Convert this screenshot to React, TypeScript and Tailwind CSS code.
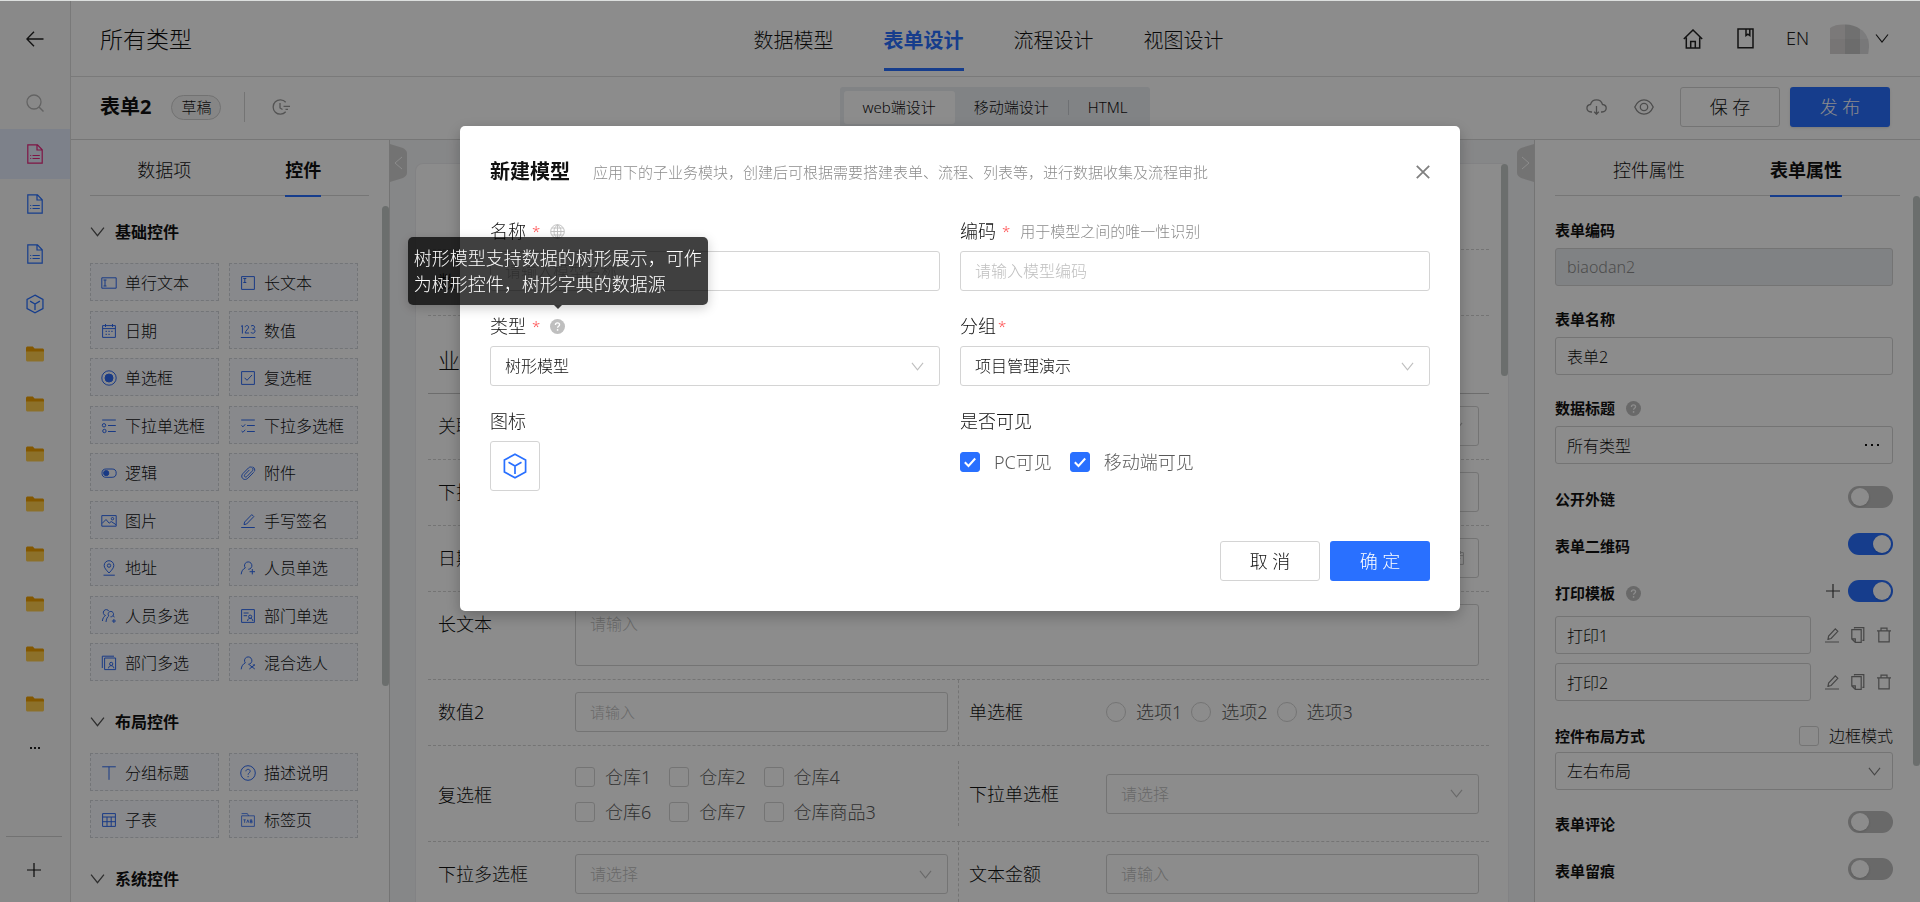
import { useState } from "react";
import type { ReactNode } from "react";

type IconProps = { className?: string };

/* ---------- ICONS ---------- */

function Svg({ className = "w-4 h-4", box = "0 0 16 16", children }: { className?: string; box?: string; children: ReactNode }) {
  return (
    <svg viewBox={box} className={`shrink-0 ${className}`} fill="none" stroke="currentColor" strokeWidth="1" aria-hidden="true">
      {children}
    </svg>
  );
}

const Chevron = ({ className = "w-[14px] h-[9px]" }: IconProps) => (
  <Svg className={className} box="0 0 14 9">
    <path d="M1 .5 7 8 13 .5" strokeWidth="1.2" />
  </Svg>
);

const Cube = ({ className }: IconProps) => (
  <Svg className={className} box="0 0 24 26">
    <path d="M12 1.2 22.6 7v12L12 24.8 1.4 19V7z M5.5 9.2 12 13l6.5-3.8 M12 13v8" strokeWidth="1.7" />
  </Svg>
);

const Doc = ({ className }: IconProps) => (
  <Svg className={className} box="0 0 16 20">
    <path d="M.8.8h9.7l4.7 5v13.4H.8z M10 .8v5.2h5.2 M3.2 11.5h1 M5.5 11.5h7.3 M3.2 14.5h1 M5.5 14.5h7.3" strokeWidth="1.2" />
  </Svg>
);

const Folder = () => (
  <Svg className="w-[18px] h-4" box="0 0 18 16">
    <path d="M0 2.2C0 1 .6.4 1.8.4h5l1.8 2h7.6c1.2 0 1.8.6 1.8 1.8V6H0z" fill="#ee9f00" stroke="none" />
    <path d="M0 5.4h18v8.4c0 1.2-.6 1.8-1.8 1.8H1.8C.6 15.6 0 15 0 13.8z" fill="#ffcd4e" stroke="none" />
  </Svg>
);

const Question = ({ className = "w-[15px] h-[15px] text-[#bfbfbf]" }: IconProps) => (
  <Svg className={className}>
    <circle cx="8" cy="8" r="8" fill="currentColor" stroke="none" />
    <path d="M5.8 6.3c0-1.3 1-2.2 2.2-2.2s2.2.8 2.2 2c0 1.7-2.1 1.7-2.1 3.3" stroke="#fff" strokeWidth="1.4" />
    <circle cx="8.1" cy="11.6" r=".9" fill="#fff" stroke="none" />
  </Svg>
);

const Pencil = ({ className }: IconProps) => (
  <Svg className={className}>
    <path d="M1 15h14 M4 12.3l.6-3.2 6.7-7.2 2.500 2.400-6.700 7.200z M4 12.300l3.100-.8" strokeWidth="1.2" />
  </Svg>
);

const Copy = ({ className }: IconProps) => (
  <Svg className={className}>
    <path d="M4.5 1.6V.7h9.3v12.600h-1.400 M1.800 2.600h9.400v12.700H5.300l-3.500-3.400z M5.300 15.300v-3.400H1.800" strokeWidth="1.2" />
  </Svg>
);

const Trash = ({ className }: IconProps) => (
  <Svg className={className}>
    <path d="M1 3.8h14 M2.8 3.8v11h10.400v-11 M5 3.800V1.200h6v2.600" strokeWidth="1.2" />
  </Svg>
);

const Plus = ({ className = "w-[14px] h-[14px]" }: IconProps) => (
  <Svg className={className} box="0 0 14 14">
    <path d="M7 0v14 M0 7h14" strokeWidth="1.2" />
  </Svg>
);

const person = "M8.3 9.3a3.700 3.700 0 1 0-3-1.400C3 9 1.500 11 1.200 14.300";

/* glyphs of the control palette */
const glyphs: Record<string, ReactNode> = {
  input: <path d="M.8 2.8h14.4v10.4H.8z M2.5 5h3 M4 5v6 M2.5 11h3" />,
  textarea: <path d="M1.6 1.6h12.8v12.8H1.600z M3.300 3.500h3 M4.800 3.500v4 M3.300 7.500h3" />,
  date: <path d="M1.6 2.6h12.8v11.800H1.600z M1.600 5.600h12.800 M4.500 1v3 M11.500 1v3 M4.500 8.300h1.500 M7.300 8.300h1.500 M10.200 8.300h1.500 M4.500 11.300h1.500 M7.300 11.300h1.500" />,
  number: (
    <path d="M.8 14.5h14.6 M1 3.500l1.400-1v8 M5.200 4.200c0-2.200 3.400-2.200 3.400 0 0 1.600-3.400 3.800-3.400 5.800H9 M11 3.200c1-1.300 3.600-.9 3.600 1.100 0 1.300-1 1.800-2 1.800 1.200 0 2.400.6 2.400 2 0 2.400-3.200 2.700-4.200 1" />
  ),
  radio: (
    <>
      <circle cx="8" cy="8" r="7.2" />
      <circle cx="8" cy="8" r="4" fill="currentColor" />
    </>
  ),
  checkbox: <path d="M1.6 1.6h12.8v12.8H1.600z M4.600 7.800l2.400 2.500 5-5.300" />,
  singleSelect: (
    <>
      <path d="M1.2 2h13.6 M7 7.5h7.8 M7 13.5h7.8" />
      <circle cx="3" cy="7.3" r="1.7" />
      <circle cx="3.4" cy="13" r="1.7" />
    </>
  ),
  multiSelect: <path d="M1.2 2h13.6 M7 7.5h7.8 M7 13.5h7.8 M1.5 7.5 3 8.800l2.200-2.500 M1.500 13 3 14.300l2.200-2.500" />,
  toggle: (
    <>
      <rect x="1" y="4" width="14.2" height="8.3" rx="4.1" />
      <circle cx="5.2" cy="8.1" r="2.6" fill="currentColor" />
    </>
  ),
  clip: <path d="M13.7 7.300l-5.800 5.900c-3.600 3.500-8.400-1-5-4.600l5.600-5.700c2.600-2.500 6 .7 3.600 3.300l-5.200 5.300c-1.600 1.500-3.500-.4-2-2l4.500-4.600 M14.300 6.500c1-1.500.3-3.800-1.700-4.600" />,
  image: (
    <>
      <path d="M.8 2.6h14.4v10.600H.8z M1 10.500l4-4 3.200 3.700 2-1.700 4.800 3.200" />
      <circle cx="11.5" cy="5.7" r="1.2" />
    </>
  ),
  sign: <path d="M1.2 14.5h13.6 M4 11.600l.6-2.600 7.200-7.400 2 2L6.600 11z" />,
  pin: (
    <>
      <path d="M2.5 15.2h11.3 M8 13C5 9.800 3.200 7.800 3.200 5.500a4.800 4.800 0 0 1 9.600 0C12.800 7.800 11 9.800 8 13z" />
      <circle cx="8" cy="5.6" r="1.7" />
    </>
  ),
  userOne: <path d={`${person} M12.3 9v5.400 M9.600 11.700H15`} />,
  userMany: <path d="M4.5 7.5A3 3 0 1 1 8 3.300 M4.500 7.500C3 8.500 1.600 10.200 1.400 13 M9.500 8.800a2.700 2.700 0 1 0-1.700-.9C6.200 9 5.300 11 5 14 M12.900 11v4 M10.900 13h4 M12 7.800l1.500 1.200" />,
  deptOne: (
    <>
      <path d="M1.6 1.6h12.8v12.800H1.600z M3.600 5h5 M3.600 7.700h3.500 M7.500 13c.2-2 1.400-2.700 2.700-2.700s2.500.7 2.700 2.700" />
      <circle cx="10.2" cy="8.7" r="1.6" />
    </>
  ),
  deptMany: (
    <>
      <path d="M3.6 3h11v11.600h-11z M1.300 13V1.200H13 M7.500 13.300c.2-2 1.400-2.600 2.700-2.600s2.500.6 2.700 2.600" />
      <circle cx="10.2" cy="8.9" r="1.6" />
    </>
  ),
  userMix: <path d={`${person} M9.3 9.800l5.500 4.200 M14.800 9.800l-5.500 4.200 M12.800 10h2.200`} />,
  title: <path d="M1.2 1.8h13.6 M8 1.8v13" />,
  desc: (
    <>
      <circle cx="8" cy="8" r="7.3" />
      <path d="M5.9 6.3c0-2.600 4.300-2.600 4.300 0 0 1.500-2.100 1.600-2.100 3.400 M8.100 11v1.200" />
    </>
  ),
  table: <path d="M1.6 1.6h12.8v12.800H1.600z M1.600 5h12.800 M1.600 9.700h12.800 M6 5v9.400 M10.200 5v9.400" />,
  tab: <path d="M1.6 3.8h12.8v10.600H1.600z M1.600 1.600h5.800l1.200 2.200 M3.400 7.800h2.400 M4.600 7.800v3 M6.700 10.800l1.100-3 1.100 3 M10.300 7.800v3h1.800v-1.500h-1.800 1.500V7.800z" strokeWidth=".8" />,
};

/* ---------- DATA ---------- */

const basicControls = [
  ["input", "单行文本"], ["textarea", "长文本"],
  ["date", "日期"], ["number", "数值"],
  ["radio", "单选框"], ["checkbox", "复选框"],
  ["singleSelect", "下拉单选框"], ["multiSelect", "下拉多选框"],
  ["toggle", "逻辑"], ["clip", "附件"],
  ["image", "图片"], ["sign", "手写签名"],
  ["pin", "地址"], ["userOne", "人员单选"],
  ["userMany", "人员多选"], ["deptOne", "部门单选"],
  ["deptMany", "部门多选"], ["userMix", "混合选人"],
];

const layoutControls = [
  ["title", "分组标题"], ["desc", "描述说明"],
  ["table", "子表"], ["tab", "标签页"],
];

/* ---------- SHARED CONTROLS ---------- */

const fieldBox = "w-full border border-[#d4d4d4] rounded-[3px] bg-white placeholder:text-[#bfbfbf] outline-none";

function SelectBox({ id, label, value, className, chevronClass = "text-[#bfbfbf]" }: { id: string; label?: string; value: string; className: string; chevronClass?: string }) {
  return (
    <div className="relative w-full">
      <select id={id} aria-label={label} defaultValue={value} className={`appearance-none ${fieldBox} ${className}`}>
        <option>{value}</option>
      </select>
      <span className={`pointer-events-none absolute right-4 inset-y-0 flex items-center ${chevronClass}`}>
        <Chevron className="w-[13px] h-[9px]" />
      </span>
    </div>
  );
}

function CheckItem({ label, checked, className = "gap-[10px] text-[18px] text-[#595959]" }: { label: string; checked?: boolean; className?: string }) {
  return (
    <label className={`flex items-center whitespace-nowrap ${className}`}>
      <span className="relative flex">
        <input type="checkbox" defaultChecked={checked} className="peer appearance-none w-5 h-5 border border-[#d4d4d4] rounded-[3px] bg-white checked:bg-[#2970ff] checked:border-[#2970ff]" />
        <svg viewBox="0 0 20 20" className="pointer-events-none absolute inset-0 w-5 h-5 opacity-0 peer-checked:opacity-100" fill="none" stroke="#fff" strokeWidth="2">
          <path d="M4.8 10.2 8.5 14l6.700-7.500" />
        </svg>
      </span>
      <span>{label}</span>
    </label>
  );
}

function Switch({ id, on }: { id: string; on?: boolean }) {
  return (
    <input
      id={id}
      type="checkbox"
      role="switch"
      defaultChecked={on}
      className="appearance-none relative shrink-0 w-[45px] h-[22px] rounded-full bg-[#bfbfbf] checked:bg-[#2970ff] before:content-[''] before:absolute before:top-[2px] before:left-[3px] before:w-[18px] before:h-[18px] before:rounded-full before:bg-white before:shadow-sm checked:before:left-[25px]"
    />
  );
}

/* ---------- LEFT RAIL ---------- */

function Rail() {
  return (
    <aside className="w-[71px] shrink-0 flex flex-col items-center bg-[#fafafa] border-r border-[#dcdcdc]">
      <button aria-label="返回" className="h-[76px] w-full flex items-center justify-center text-[#222]">
        <Svg className="w-[18px] h-4" box="0 0 18 16">
          <path d="M17.5 8H1 M8 .8.9 8 8 15.2" strokeWidth="1.4" />
        </Svg>
      </button>
      <button aria-label="搜索" className="h-[52px] w-full flex items-center justify-center text-[#b5b5b5]">
        <Svg className="w-[18px] h-[18px]" box="0 0 18 18">
          <circle cx="8" cy="8" r="7" strokeWidth="1.3" />
          <path d="m13 13 4.5 4.5" strokeWidth="1.5" />
        </Svg>
      </button>
      <button aria-label="表单" className="h-[50px] w-full flex items-center justify-center bg-[#e4ebfb] text-[#e5267e]">
        <Doc className="w-4 h-5" />
      </button>
      {[1, 2].map((n) => (
        <button key={n} aria-label="表单" className="h-[50px] w-full flex items-center justify-center text-[#2970ff]">
          <Doc className="w-4 h-5" />
        </button>
      ))}
      <button aria-label="模型" className="h-[50px] w-full flex items-center justify-center text-[#2970ff]">
        <Cube className="w-[18px] h-5" />
      </button>
      {[1, 2, 3, 4, 5, 6, 7, 8].map((n) => (
        <button key={n} aria-label="分组" className="h-[50px] w-full flex items-center justify-center">
          <Folder />
        </button>
      ))}
      <button aria-label="更多" className="h-[38px] w-full flex items-center justify-center text-[#222]">
        <Svg className="w-[10px] h-[2px]" box="0 0 10 2">
          <path d="M0 1h2 M4 1h2 M8 1h2" strokeWidth="2" />
        </Svg>
      </button>
      <div className="mt-auto w-full pl-[6px] pr-2">
        <div className="border-t border-[#d0d0d0]" />
      </div>
      <button aria-label="新增" className="h-[65px] w-full flex items-center justify-center pr-[2px] text-[#111]">
        <Plus />
      </button>
    </aside>
  );
}

/* ---------- HEADERS ---------- */

function TopBar() {
  const tabs = ["数据模型", "表单设计", "流程设计", "视图设计"];
  return (
    <header className="h-[76px] shrink-0 grid grid-cols-[1fr_auto_1fr] items-center pl-[29px] pr-[31px] border-b border-[#dedede]">
      <h1 className="text-[23px] leading-8">所有类型</h1>
      <nav className="h-full flex gap-[50px] pr-3 text-[20px]">
        {tabs.map((tab) => (
          <a
            key={tab}
            href="#"
            className={`h-[70px] flex items-center pt-[13px] border-b-3 ${
              tab === "表单设计" ? "border-[#2970ff] text-[#2970ff] font-bold" : "border-transparent"
            }`}
          >
            {tab}
          </a>
        ))}
      </nav>
      <div className="flex items-center justify-end text-[#222]">
        <button aria-label="首页">
          <Svg className="w-5 h-5" box="0 0 20 20">
            <path d="M.8 10 10 1l9.200 9 M3.300 8.500v10.400h13.400V8.500 M7.700 18.900v-6.400h4.600v6.400" strokeWidth="1.5" />
          </Svg>
        </button>
        <button aria-label="文档" className="ml-[34px]">
          <Svg className="w-[17px] h-[21px]" box="0 0 17 21">
            <path d="M1 1h15v18.800H1z M9 1v6.500l1.900-1.400L12.800 7.500V1" strokeWidth="1.5" />
          </Svg>
        </button>
        <button className="ml-8 text-[18px]">EN</button>
        <button aria-label="账户" className="ml-[21px] flex items-center gap-[6px]">
          <svg viewBox="0 0 39 30" className="w-[39px] h-[30px]" aria-hidden="true">
            <path d="M0 4C4 1 10 0 15 .5V30H0z" fill="#e0dcdc" />
            <path d="M15 .5C20 .3 26 2 30 5v25H15z" fill="#cccccc" />
            <path d="M30 5c6 3 9 10 9 18l-1 7h-8z" fill="#e2e2e4" />
            <path d="M0 15h39v15H0z" fill="#000" opacity=".03" />
          </svg>
          <Chevron />
        </button>
      </div>
    </header>
  );
}

function ToolBar() {
  return (
    <div className="h-[63px] shrink-0 grid grid-cols-[1fr_auto_1fr] items-center pb-[2px] pl-[29px] pr-[30px] border-b border-[#d8d8d8]">
      <div className="flex items-center">
        <h2 className="text-[20px] font-bold">表单2</h2>
        <span className="ml-5 h-[25px] px-[9px] flex items-center rounded-full border border-[#cfcfcf] bg-[#f5f5f5] text-[15px]">草稿</span>
        <span className="ml-[23px] h-[30px] border-l border-[#d4d4d4]" />
        <button aria-label="历史" className="ml-[27px] text-[#999]">
          <Svg className="w-[18px] h-4" box="0 0 18 16">
            <path d="M13.7 3.2A7.200 7.200 0 1 0 13.700 12.800 M8 4v5l2.500 1.500 M11.500 7.300H18 M13.500 10.300H16" strokeWidth="1.3" />
          </Svg>
        </button>
      </div>
      <div className="flex items-center p-1 rounded-[3px] bg-[#ebeef2] text-[15px] leading-[33px]">
        <button className="px-[19px] rounded-[3px] bg-white">web端设计</button>
        <button className="px-[19px]">移动端设计</button>
        <span className="h-[15px] border-l border-[#c8ccd2]" />
        <button className="px-[19px]">HTML</button>
      </div>
      <div className="flex items-center justify-end">
        <button aria-label="下载" className="text-[#8c8c8c]">
          <Svg className="w-[21px] h-4" box="0 0 21 16">
            <path d="M6 13H5.200C-.5 12.500-.2 6 4.500 5.500 6-.8 15-.8 16.500 5.500c5 .5 5 7-.5 7.500h-1 M10.500 7v8 M8.200 12.800l2.300 2.400 2.300-2.400" strokeWidth="1.3" />
          </Svg>
        </button>
        <button aria-label="预览" className="ml-[27px] mr-[26px] text-[#8c8c8c]">
          <Svg className="w-5 h-4" box="0 0 20 16">
            <path d="M.8 8C5-1.500 15-1.500 19.200 8 15 17.500 5 17.500.8 8z" strokeWidth="1.3" />
            <circle cx="10" cy="8" r="3.7" strokeWidth="1.3" />
          </Svg>
        </button>
        <button className="w-[100px] h-10 border border-[#d4d4d4] rounded-[3px] text-[18px]">保 存</button>
        <button className="ml-[10px] w-[100px] h-10 rounded-[3px] bg-[#2970ff] text-white text-[18px] shadow-sm">发 布</button>
      </div>
    </div>
  );
}

/* ---------- CONTROL PALETTE ---------- */

function PaletteTitle({ title }: { title: string }) {
  return (
    <h3 className="h-8 flex items-center gap-[10px] text-[16px] font-semibold">
      <Chevron className="w-[15px] h-[10px] text-[#555]" />
      {title}
    </h3>
  );
}

function PaletteGrid({ items, className }: { items: string[][]; className: string }) {
  return (
    <div className={`mt-[15px] mb-[25px] grid grid-cols-2 gap-x-[10px] content-between ${className}`}>
      {items.map(([icon, name]) => (
        <button key={name} className="h-[38px] flex items-center gap-2 pt-[2px] pl-[10px] border border-dashed border-[#d2d5db] bg-[#f7f9ff] text-[16px] whitespace-nowrap">
          <Svg className="w-4 h-4 text-[#2f6bf2]">{glyphs[icon]}</Svg>
          {name}
        </button>
      ))}
    </div>
  );
}

function Palette() {
  return (
    <section className="relative w-[319px] shrink-0 border-r border-[#d4d4d4] overflow-hidden">
      <div className="ml-[19px] mr-5 h-14 grid grid-cols-2 justify-items-center border-b border-[#d8d8d8] text-[18px]">
        <a href="#" className="h-14 flex items-center pt-[5px] pl-[9px]">数据项</a>
        <a href="#" className="h-[57px] flex items-center pt-[5px] ml-2 border-b-2 border-[#2970ff] font-bold">控件</a>
      </div>
      <div className="pt-5 pl-[19px] w-[287px]">
        <PaletteTitle title="基础控件" />
        <PaletteGrid items={basicControls} className="h-[418px]" />
        <PaletteTitle title="布局控件" />
        <PaletteGrid items={layoutControls} className="h-[85px]" />
        <PaletteTitle title="系统控件" />
      </div>
      <div className="absolute right-0 top-[66px] w-[7px] h-[480px] rounded-full bg-[#c3c9c7]" />
    </section>
  );
}

/* ---------- FORM CANVAS ---------- */

function FormRow({ label, htmlFor, children, className = "items-center pt-3 pb-[13px]" }: { label: string; htmlFor?: string; children?: ReactNode; className?: string }) {
  return (
    <div className={`flex-1 flex px-[10px] ${className}`}>
      <label htmlFor={htmlFor} className="w-[137px] shrink-0 text-[18px] leading-[40px]">{label}</label>
      <div className="flex-1">{children}</div>
    </div>
  );
}

const dashedRow = "flex border-b border-dashed border-[#d4d4d4]";
const canvasField = `${fieldBox} h-10 px-[14px] text-[16px]`;

function Canvas() {
  return (
    <main className="relative flex-1 min-w-0 px-[25px] pt-[23px] bg-[#f5f6f8] overflow-hidden">
      <div className="relative h-full pl-3 pr-[19px] bg-white rounded-t-[8px] border border-b-0 border-[#ededf0]">
        <div className={`${dashedRow} h-[86px]`} />
        <div className={dashedRow}>
          <FormRow label="数" />
        </div>
        <div className="h-[78px] pt-7 pl-[10px] border-b border-[#c6c6c6] text-[22px] leading-8">业务信息</div>
        <div className={dashedRow}>
          <FormRow label="关联表单" htmlFor="f-rel">
            <SelectBox id="f-rel" value="请选择" className="h-10 px-[14px] text-[16px] text-[#bfbfbf]" />
          </FormRow>
        </div>
        <div className={dashedRow}>
          <FormRow label="下拉框" htmlFor="f-drop"><input id="f-drop" placeholder="请选择" className={canvasField} /></FormRow>
        </div>
        <div className={dashedRow}>
          <FormRow label="日期" htmlFor="f-date">
            <div className="relative">
              <input id="f-date" placeholder="请选择" className={canvasField} />
              <Svg className="absolute right-[14px] top-3 w-4 h-4 text-[#bfbfbf]">{glyphs.date}</Svg>
            </div>
          </FormRow>
        </div>
        <div className={dashedRow}>
          <FormRow label="长文本" htmlFor="f-long" className="items-start pt-3 pb-[13px]">
            <textarea id="f-long" placeholder="请输入" className={`${fieldBox} block h-[62px] px-[14px] py-[7px] text-[16px] resize-none`} />
          </FormRow>
        </div>
        <div className={dashedRow}>
          <FormRow label="数值2" htmlFor="f-num2">
            <input id="f-num2" placeholder="请输入" className={`${fieldBox} h-10 px-[14px] text-[15px]`} />
          </FormRow>
          <span className="border-l border-dashed border-[#d4d4d4]" />
          <FormRow label="单选框">
            <div className="flex gap-[9px] text-[18px] text-[#595959]">
              {["选项1", "选项2", "选项3"].map((name) => (
                <label key={name} className="flex items-center gap-[10px]">
                  <input type="radio" name="option" className="appearance-none w-5 h-5 rounded-full border border-[#d4d4d4]" />
                  {name}
                </label>
              ))}
            </div>
          </FormRow>
        </div>
        <div className={`${dashedRow} h-24`}>
          <FormRow label="复选框" className="items-center pt-[2px]">
            <div className="grid grid-cols-[repeat(3,max-content)] gap-x-[18px] gap-y-2 leading-[27px]">
              {["仓库1", "仓库2", "仓库4", "仓库6", "仓库7", "仓库商品3"].map((name) => (
                <CheckItem key={name} label={name} />
              ))}
            </div>
          </FormRow>
          <span className="self-center h-[65px] border-l border-dashed border-[#d4d4d4]" />
          <FormRow label="下拉单选框" htmlFor="f-single" className="items-center">
            <SelectBox id="f-single" value="请选择" className="h-10 px-[14px] text-[16px] text-[#bfbfbf]" />
          </FormRow>
        </div>
        <div className={dashedRow}>
          <FormRow label="下拉多选框" htmlFor="f-multi">
            <SelectBox id="f-multi" value="请选择" className="h-10 px-[14px] text-[16px] text-[#bfbfbf]" />
          </FormRow>
          <span className="border-l border-dashed border-[#d4d4d4]" />
          <FormRow label="文本金额" htmlFor="f-money"><input id="f-money" placeholder="请输入" className={canvasField} /></FormRow>
        </div>
        <div className="absolute right-0 top-0 w-[7px] h-[212px] rounded-full bg-[#c3c9c7]" />
      </div>
      {/* collapse handles */}
      <button aria-label="收起左侧" className="absolute left-0 top-1 text-white">
        <svg viewBox="0 0 17 38" className="w-[17px] h-[38px]">
          <path d="M0 0l13 4c2 1 4 3 4 5v20c0 2-2 4-4 5L0 38z" fill="#d2d2d2" />
          <path d="M12 13l-7 6 7 6" fill="none" stroke="#fff" />
        </svg>
      </button>
      <button aria-label="收起右侧" className="absolute right-0 top-1 text-white">
        <svg viewBox="0 0 17 38" className="w-[17px] h-[38px]">
          <path d="M17 0L4 4C2 5 0 7 0 9v20c0 2 2 4 4 5l13 4z" fill="#d2d2d2" />
          <path d="M5 13l7 6-7 6" fill="none" stroke="#fff" />
        </svg>
      </button>
    </main>
  );
}

/* ---------- PROPERTIES PANEL ---------- */

const propField = `${fieldBox} h-[38px] px-[11px] text-[16px]`;
const propLabel = "h-5 flex items-center gap-[11px] text-[15px] font-semibold";

function SwitchRow({ id, label, on, help, addable }: { id: string; label: string; on?: boolean; help?: boolean; addable?: boolean }) {
  return (
    <div className="h-[22px] flex items-center">
      <label htmlFor={id} className={`${propLabel} mt-1`}>
        {label}
        {help && <Question />}
      </label>
      <div className="ml-auto flex items-center gap-2">
        {addable && (
          <button aria-label="新增模板" className="text-[#444]"><Plus /></button>
        )}
        <Switch id={id} on={on} />
      </div>
    </div>
  );
}

function Properties() {
  return (
    <section className="relative w-[386px] shrink-0 border-l border-[#d4d4d4] overflow-hidden">
      <div className="mx-5 h-14 flex border-b border-[#d8d8d8] text-[18px]">
        <a href="#" className="h-14 flex items-center pt-[5px] ml-[58px]">控件属性</a>
        <a href="#" className="h-[57px] flex items-center pt-[5px] ml-[85px] border-b-2 border-[#2970ff] font-bold">表单属性</a>
      </div>
      <div className="pt-6 pl-5 pr-[27px]">
        <div className="flex flex-col gap-[23px]">
          <div className="flex flex-col gap-2">
            <label htmlFor="p-code" className={propLabel}>表单编码</label>
            <input id="p-code" disabled defaultValue="biaodan2" className="w-full h-[38px] px-[11px] border border-[#d4d4d4] rounded-[3px] bg-[#eaedf0] text-[16px] text-[#8c8c8c]" />
          </div>
          <div className="flex flex-col gap-2">
            <label htmlFor="p-name" className={propLabel}>表单名称</label>
            <input id="p-name" defaultValue="表单2" className={propField} />
          </div>
          <div className="flex flex-col gap-2">
            <label htmlFor="p-title" className={propLabel}>
              数据标题
              <Question />
            </label>
            <div className="relative">
              <input id="p-title" defaultValue="所有类型" className={propField} />
              <button aria-label="选择" className="absolute right-[13px] inset-y-0">
                <Svg className="w-[15px] h-[2px]" box="0 0 15 2">
                  <path d="M0 1h2 M6 1h2 M12 1h2" strokeWidth="2" />
                </Svg>
              </button>
            </div>
          </div>
        </div>
        <div className="mt-[22px] flex flex-col gap-[25px]">
          <SwitchRow id="p-link" label="公开外链" />
          <SwitchRow id="p-qr" label="表单二维码" on />
          <SwitchRow id="p-print" label="打印模板" on help addable />
        </div>
        <div className="mt-[14px] flex flex-col gap-[9px]">
          {["打印1", "打印2"].map((name) => (
            <div key={name} className="flex items-center justify-between pr-[1px]">
              <div className="w-[256px]">
                <input aria-label={name} defaultValue={name} className={propField} />
              </div>
              <div className="flex gap-[10px] text-[#808080]">
                <button aria-label="编辑"><Pencil className="w-4 h-4" /></button>
                <button aria-label="复制"><Copy className="w-4 h-4" /></button>
                <button aria-label="删除"><Trash className="w-4 h-4" /></button>
              </div>
            </div>
          ))}
        </div>
        <div className="mt-[25px] h-5 flex items-center justify-between">
          <label htmlFor="p-layout" className={propLabel}>控件布局方式</label>
          <CheckItem label="边框模式" className="gap-[10px] text-[16px]" />
        </div>
        <div className="mt-[6px]">
          <SelectBox id="p-layout" value="左右布局" className="h-[38px] px-[11px] text-[16px]" chevronClass="text-[#808080] -mr-1" />
        </div>
        <div className="mt-[21px] flex flex-col gap-[25px]">
          <SwitchRow id="p-comment" label="表单评论" />
          <SwitchRow id="p-trace" label="表单留痕" />
        </div>
      </div>
      <div className="absolute right-0 top-14 w-[7px] h-[570px] rounded-full bg-[#c3c9c7]" />
    </section>
  );
}

/* ---------- NEW MODEL DIALOG ---------- */

const Star = () => <span className="text-[#ff4d4f] text-[15px]">*</span>;
const dialogLabel = "h-[26px] flex items-center text-[18px]";
const dialogField = `${fieldBox} h-10 px-[14px] text-[16px]`;

function NewModelDialog({ onClose }: { onClose: () => void }) {
  return (
    <div className="fixed inset-x-0 top-px bottom-0 flex items-start justify-center pt-[125px] bg-black/45">
      <div role="dialog" aria-labelledby="dialog-title" className="w-[1000px] px-[30px] pt-[30px] pb-[30px] bg-white rounded-[5px] shadow-[0_5px_15px_rgba(0,0,0,0.25)]">
        <div className="h-8 flex items-center">
          <h2 id="dialog-title" className="text-[20px] font-bold">新建模型</h2>
          <p className="ml-[23px] text-[15px] text-[#8c8c8c]">应用下的子业务模块，创建后可根据需要搭建表单、流程、列表等，进行数据收集及流程审批</p>
          <button aria-label="关闭" onClick={onClose} className="ml-auto text-[#808080]">
            <Svg className="w-[14px] h-[14px]" box="0 0 14 14">
              <path d="M.8.8l12.4 12.4 M13.2.8.8 13.2" strokeWidth="1.8" />
            </Svg>
          </button>
        </div>

        <div className="mt-[30px] grid grid-cols-[450px_1fr] gap-x-5 gap-y-[22px]">
          <div className="flex flex-col gap-[7px]">
            <label htmlFor="m-name" className={`${dialogLabel} gap-[6px]`}>
              名称 <Star />
              <Svg className="ml-1 w-[15px] h-[15px] text-[#bfbfbf]">
                <circle cx="8" cy="8" r="7.3" />
                <path d="M8 .8v14.400 M.8 8h14.400 M8 .8C3 4.500 3 11.500 8 15.200 13 11.500 13 4.500 8 .8z M2 4.300h12 M2 11.700h12" />
              </Svg>
            </label>
            <input id="m-name" placeholder="请输入模型名称" className={dialogField} />
          </div>
          <div className="flex flex-col gap-[7px]">
            <label htmlFor="m-code" className={`${dialogLabel} gap-[6px]`}>
              编码 <Star />
              <span className="ml-1 text-[15px] text-[#8c8c8c]">用于模型之间的唯一性识别</span>
            </label>
            <input id="m-code" placeholder="请输入模型编码" className={dialogField} />
          </div>
          <div className="flex flex-col gap-[7px]">
            <div className={`${dialogLabel} gap-[6px]`}>
              <label htmlFor="m-type">类型</label> <Star />
              <span className="relative ml-1">
                <Question />
                <span role="tooltip" className="absolute left-1/2 bottom-full mb-[14px] -translate-x-1/2 w-[300px] px-[6px] py-2 rounded-[5px] bg-black/75 text-white text-[18px] leading-[26px] shadow-[0_3px_12px_rgba(0,0,0,0.2)]">
                  树形模型支持数据的树形展示，可作为树形控件，树形字典的数据源
                  <span className="absolute left-1/2 top-full -translate-x-1/2 border-x-4 border-t-4 border-x-transparent border-t-black/75" />
                </span>
              </span>
            </div>
            <SelectBox id="m-type" value="树形模型" className="h-10 px-[14px] text-[16px]" />
          </div>
          <div className="flex flex-col gap-[7px]">
            <label htmlFor="m-group" className={`${dialogLabel} gap-[2px]`}>分组<Star /></label>
            <SelectBox id="m-group" value="项目管理演示" className="h-10 px-[14px] text-[16px]" />
          </div>
          <div className="flex flex-col gap-[7px]">
            <span className={dialogLabel}>图标</span>
            <button aria-label="选择图标" className="w-[50px] h-[50px] flex items-center justify-center border border-[#d4d4d4] rounded-[3px] text-[#2970ff]">
              <Cube className="w-6 h-[26px]" />
            </button>
          </div>
          <div className="flex flex-col gap-[7px]">
            <span className={dialogLabel}>是否可见</span>
            <div className="h-[42px] flex items-center gap-[18px]">
              <CheckItem label="PC可见" checked className="gap-[14px] text-[18px] text-[#595959]" />
              <CheckItem label="移动端可见" checked className="gap-[14px] text-[18px] text-[#595959]" />
            </div>
          </div>
        </div>

        <div className="mt-[50px] flex justify-end gap-[10px] text-[18px]">
          <button onClick={onClose} className="w-[100px] h-10 border border-[#d4d4d4] rounded-[3px]">取 消</button>
          <button className="w-[100px] h-10 rounded-[3px] bg-[#2970ff] text-white">确 定</button>
        </div>
      </div>
    </div>
  );
}

export default function App() {
  const [open, setOpen] = useState(true);

  return (
    <div className="h-screen flex overflow-hidden border-t border-[#dcdfde] bg-white text-[#111] font-light font-['Noto_Sans','Noto_Sans_CJK_SC',sans-serif]">
      <Rail />
      <div className="flex-1 min-w-0 flex flex-col">
        <TopBar />
        <ToolBar />
        <div className="flex-1 min-h-0 flex">
          <Palette />
          <Canvas />
          <Properties />
        </div>
      </div>
      {open && <NewModelDialog onClose={() => setOpen(false)} />}
    </div>
  );
}
